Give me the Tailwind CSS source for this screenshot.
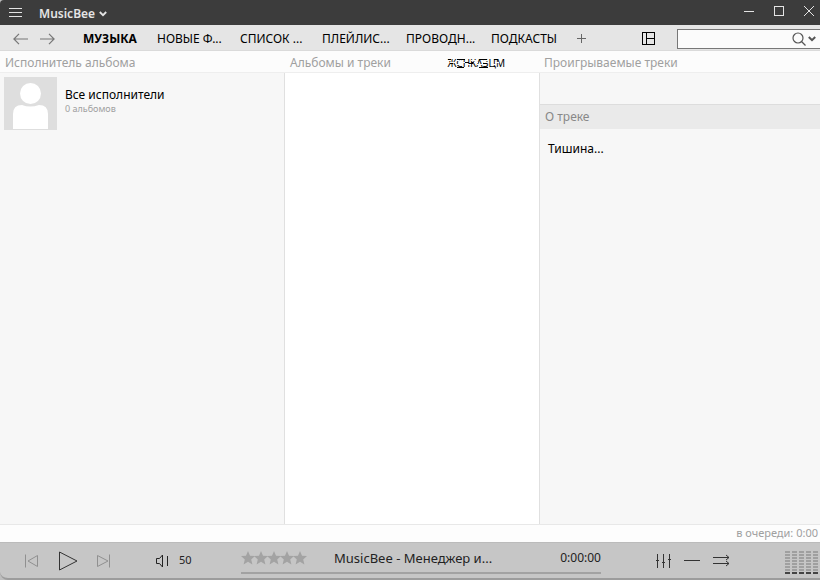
<!DOCTYPE html>
<html lang="ru">
<head>
  <meta charset="UTF-8">
  <meta name="viewport" content="width=device-width, initial-scale=1.0">
  <title>MusicBee</title>
  <script src="https://cdn.jsdelivr.net/npm/@tailwindcss/browser@4"></script>
</head>
<body class="h-screen flex flex-col overflow-hidden bg-[#bdbdbd] text-xs text-black font-['Noto_Sans','Open_Sans',sans-serif]">

  <!-- Title bar -->
  <header class="h-[25px] shrink-0 flex items-center bg-[#3c3c3c] text-[#e4e4e4] rounded-tl-sm">
    <button aria-label="Меню" class="w-8 flex justify-center">
      <svg width="14" height="10" viewBox="0 0 14 10" stroke="currentColor" shape-rendering="crispEdges"><path d="M0 .5h13M0 4.5h13M0 8.5h13"/></svg>
    </button>
    <button class="ml-[7px] flex items-center gap-1 pt-0.5 font-semibold">
      MusicBee
      <svg width="8" height="6" viewBox="0 0 8 6" fill="none" stroke="currentColor" stroke-width="1.8"><path d="M.8 1 4 4.2 7.2 1"/></svg>
    </button>
    <div class="ml-auto flex h-full items-center pr-1 pb-1 gap-4">
      <button aria-label="Свернуть" class="w-3.5 flex justify-center"><svg width="10" height="10" viewBox="0 0 10 10" stroke="currentColor" shape-rendering="crispEdges"><path d="M0 5.5h10"/></svg></button>
      <button aria-label="Развернуть" class="w-3.5 flex justify-center"><svg width="10" height="10" viewBox="0 0 10 10" fill="none" stroke="currentColor" shape-rendering="crispEdges"><path d="M.5.5h9v9h-9z"/></svg></button>
      <button aria-label="Закрыть" class="w-3.5 flex justify-center"><svg width="12" height="12" viewBox="0 0 12 12" stroke="currentColor"><path d="m1 1 10 10M11 1 1 11"/></svg></button>
    </div>
  </header>

  <!-- Tabs -->
  <nav class="h-[26px] shrink-0 flex items-center pt-0.5 bg-[#e5e5e5] border-b border-[#dadada]">
    <div class="w-[83px] shrink-0 flex items-center gap-3 pl-[13px] text-[#777777]">
      <button aria-label="Назад"><svg width="15" height="12" viewBox="0 0 15 12" fill="none" stroke="currentColor" stroke-width="1.2"><path d="M15 6H1M6 .8.9 6 6 11.2"/></svg></button>
      <button aria-label="Вперёд"><svg width="15" height="12" viewBox="0 0 15 12" fill="none" stroke="currentColor" stroke-width="1.2"><path d="M0 6h14M9 .8 14.1 6 9 11.2"/></svg></button>
    </div>
    <button class="w-[74px] text-left font-bold">МУЗЫКА</button>
    <button class="w-[83px] text-left">НОВЫЕ Ф...</button>
    <button class="w-[82px] text-left">СПИСОК ...</button>
    <button class="w-[84px] text-left">ПЛЕЙЛИС...</button>
    <button class="w-[85px] text-left">ПРОВОДН...</button>
    <button class="w-[86px] text-left">ПОДКАСТЫ</button>
    <button aria-label="Добавить вкладку" class="text-[#666666]"><svg width="9" height="9" viewBox="0 0 9 9" stroke="currentColor" shape-rendering="crispEdges"><path d="M0 4.5h9M4.5 0v9"/></svg></button>
    <button aria-label="Компоновка" class="ml-auto mr-[22px]"><svg width="13" height="13" viewBox="0 0 13 13" fill="none" stroke="currentColor" shape-rendering="crispEdges"><path d="M.5.5h12v12H.5zM4.5.5v12M4.5 6.5h8"/></svg></button>
    <label class="w-[143px] h-5 flex items-center gap-0.5 pr-1 border border-r-0 border-[#777777] bg-[#fbfbfb] text-[#555555]">
      <input type="text" aria-label="Поиск" class="flex-1 min-w-0 h-full px-1 bg-transparent outline-none">
      <svg width="14" height="14" viewBox="0 0 14 14" fill="none" stroke="currentColor" stroke-width="1.2"><circle cx="6" cy="6" r="5"/><path d="m9.5 9.5 4 4"/></svg>
      <svg width="8" height="6" viewBox="0 0 8 6" fill="none" stroke="currentColor" stroke-width="2"><path d="M.8 1 4 4.2 7.2 1"/></svg>
    </label>
  </nav>

  <!-- Panel headings -->
  <div class="h-[22px] shrink-0 flex items-center pt-0.5 bg-[#fcfcfc] border-b border-[#eeeeee] text-[#a0a0a0]">
    <h2 class="w-[285px] pl-[5px]">Исполнитель альбома</h2>
    <div class="flex-1 flex items-center justify-between pl-[5px] pr-[34px]">
      <h2>Альбомы и треки</h2>
      <!-- sort label, drawn half erased -->
      <button class="relative h-3 flex items-center overflow-hidden text-[10px] leading-3 text-black">
        ЖСНКАЗЦМ
        <svg class="absolute inset-0" width="100%" height="12" stroke="#fcfcfc" shape-rendering="crispEdges"><path d="M0 3.5h4m5 0h3m12 0h5m8 0h4M3 5.5h6m4 0h5m9 0h4m6 0h5m6 0h4M9 7.500h5m6 0h4m6 0h6m8 0h5"/></svg>
        <svg class="absolute inset-0" width="100%" height="12" stroke="currentColor" shape-rendering="crispEdges"><path d="M1 2.500h3m6 0h8m14 0h8m7 0h4M3 6.500h3m16 0h4m10 0h4M10 10.500h7m15 0h9"/></svg>
      </button>
    </div>
    <h2 class="w-[281px] pl-[5px]">Проигрываемые треки</h2>
  </div>

  <main class="flex-1 min-h-0 flex bg-[#f7f7f7]">
    <!-- Artists -->
    <section class="w-[285px] border-r border-[#e0e0e0] p-1">
      <a href="#" class="flex gap-2">
        <svg width="53" height="53" viewBox="0 0 53 53"><path fill="#dedede" d="M0 0h53v53H0z"/><g fill="#fff"><circle cx="26.5" cy="16.5" r="10.5"/><path d="M9 52V37q0-9 9-9 8 3 17 0 9 0 9 9v15z"/></g></svg>
        <span class="pt-2.5">
          <span class="block leading-4">Все исполнители</span>
          <span class="block text-[9px] leading-3 text-[#a0a0a0]">0 альбомов</span>
        </span>
      </a>
    </section>

    <!-- Albums and tracks -->
    <section class="flex-1 bg-white"></section>

    <!-- Now playing -->
    <section class="w-[281px] border-l border-[#e0e0e0]">
      <div class="h-[31px]"></div>
      <h3 class="h-[25px] flex items-center pl-[5px] bg-[#eaeaea] border-t border-[#dddddd] text-[#888888]">О треке</h3>
      <p class="pt-3 pl-2 leading-4">Тишина...</p>
    </section>
  </main>

  <!-- Queue status -->
  <div class="h-[18px] shrink-0 flex items-center justify-end pr-0.5 bg-[#fdfdfd] border-t border-[#e8e8e8] text-[11px] text-[#a0a0a0]">в очереди: 0:00</div>

  <!-- Player -->
  <footer class="h-[38px] shrink-0 flex items-center bg-[#c6c6c6] border-t border-[#bbbbbb] border-b-2 border-b-[#9c9c9c] rounded-bl-lg text-[#222222]">
    <div class="w-[155px] flex items-center pl-6 text-[#909090]">
      <button aria-label="Предыдущий"><svg width="14" height="14" viewBox="0 0 14 14" fill="none" stroke="currentColor"><path d="M1.5.5v13M13.5 1.5v11L4 7z"/></svg></button>
      <button aria-label="Воспроизвести" class="ml-5 text-[#333333]"><svg width="20" height="20" viewBox="0 0 20 20" fill="none" stroke="currentColor"><path d="M1.500 1v18L19 10z"/></svg></button>
      <button aria-label="Следующий" class="ml-[18px]"><svg width="14" height="14" viewBox="0 0 14 14" fill="none" stroke="currentColor"><path d="M13.5.5v13M1.500 1.500v11L12 7z"/></svg></button>
    </div>
    <button aria-label="Громкость"><svg width="14" height="14" viewBox="0 0 14 14" fill="none" stroke="currentColor"><path d="M1.500 4.500h3l3-3.500v12l-3-3.500h-3zM12.500 2v10"/></svg></button>
    <span class="w-[72px] pl-2.5 text-[11px]">50</span>
    <div class="w-[360px] h-full flex flex-col justify-end gap-1 pb-1">
      <div class="flex items-center leading-5 text-[13px]">
        <svg width="66" height="14" viewBox="0 0 66 14" fill="#a3a3a3" role="img" aria-label="Оценка">
          <defs><path id="star" d="m7 0 2 4.700 5 .4-3.800 3.300 1.200 5L7 10.700l-4.400 2.700 1.200-5L0 5.100l5-.4z"/></defs>
          <use href="#star"/><use href="#star" x="13"/><use href="#star" x="26"/><use href="#star" x="39"/><use href="#star" x="52"/>
        </svg>
        <span class="ml-[27px]">MusicBee - Менеджер и...</span>
        <span class="ml-auto text-xs">0:00:00</span>
      </div>
      <div class="h-0.5 bg-[#a2a2a2]"></div>
    </div>
    <div class="ml-auto flex items-center gap-3 text-[#333333]">
      <button aria-label="Эквалайзер"><svg width="17" height="14" viewBox="0 0 17 14" stroke="currentColor" shape-rendering="crispEdges"><path d="M2.500 0v14M8.500 0v14M14.500 0v14M1 6.500h3M7 8.500h3M13 5.500h3"/></svg></button>
      <button aria-label="Повтор"><svg width="17" height="14" viewBox="0 0 17 14" stroke="currentColor" shape-rendering="crispEdges"><path d="M0 6.500h16"/></svg></button>
      <button aria-label="Перемешать"><svg width="17" height="14" viewBox="0 0 17 14" fill="none" stroke="currentColor"><path d="M0 3.500h16M0 9.500h16M13 1l3 2.500L13 6M13 7l3 2.500-3 2.500"/></svg></button>
    </div>
    <svg class="ml-[55px] mr-0.5 mt-1" width="33" height="24" viewBox="0 0 33 24" fill="none" stroke-width="5" stroke-dasharray="2 1">
      <path stroke="#a0a0a0" d="M2.500 0v21M9.500 0v21M16.500 0v21M23.500 0v21M30.500 0v21"/>
      <path stroke="#444" d="M2.500 21v2M9.500 21v2M16.500 21v2M23.500 21v2M30.500 21v2"/>
    </svg>
  </footer>

</body>
</html>
